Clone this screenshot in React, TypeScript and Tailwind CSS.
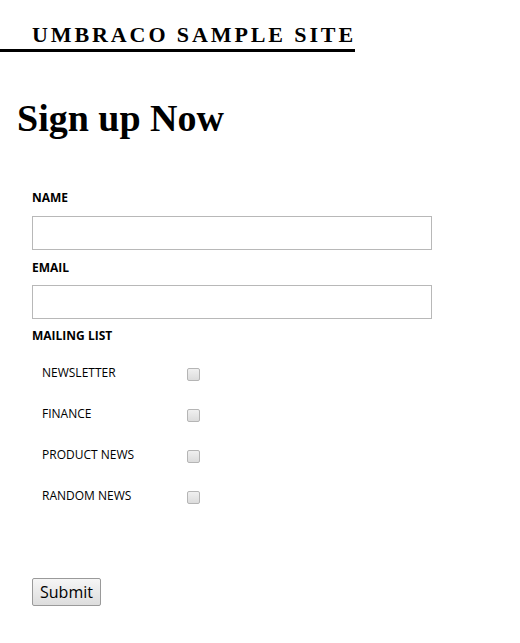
import React from "react";

export default function App() {
  const lists = ["NEWSLETTER", "FINANCE", "PRODUCT NEWS", "RANDOM NEWS"];
  return (
    <div className="bg-white min-h-[643px] text-black font-['Open_Sans',_'Liberation_Sans',_sans-serif]">
      <div className="pt-[21px]">
        <div className="w-[355px] border-b-[3px] border-black pl-[32px] pb-[1px] whitespace-nowrap">
          <span className="font-['Liberation_Serif',_serif] font-bold text-[22px] leading-[27px] tracking-[2.9px]">
            UMBRACO SAMPLE SITE
          </span>
        </div>
      </div>
      <h1 className="font-['Liberation_Serif',_serif] font-bold text-[38px] leading-[48px] ml-[17px] mt-[42px]">
        Sign up Now
      </h1>
      <form className="pl-[32px] mt-[47px]" onSubmit={(e) => e.preventDefault()}>
        <label className="block text-[12px] font-bold leading-[17px]">NAME</label>
        <input className="block mt-[10px] w-[400px] h-[34px] border border-[#b8b8b8] outline-none" />
        <label className="block text-[12px] font-bold leading-[17px] mt-[9px]">EMAIL</label>
        <input className="block mt-[9px] w-[400px] h-[34px] border border-[#b8b8b8] outline-none" />
        <label className="block text-[12px] font-bold leading-[17px] mt-[8px]">MAILING LIST</label>
        <div className="mt-[20px] flex flex-col gap-[24px] pl-[10px]">
          {lists.map((l) => (
            <div key={l} className="flex items-center h-[17px]">
              <span className="w-[145px] text-[12px] leading-[17px]">{l}</span>
              <span className="w-[13px] h-[13px] mt-[4px] rounded-[2px] border border-[#b5b5b5] bg-gradient-to-b from-[#f0f0f0] to-[#dcdcdc]" />
            </div>
          ))}
        </div>
        <button
          type="submit"
          className="block mt-[74px] h-[28px] px-[7px] text-[16px] leading-[20px] border border-[#9a9a9a] rounded-[2px] bg-gradient-to-b from-[#f6f6f6] to-[#dddddd]"
        >
          Submit
        </button>
      </form>
    </div>
  );
}
